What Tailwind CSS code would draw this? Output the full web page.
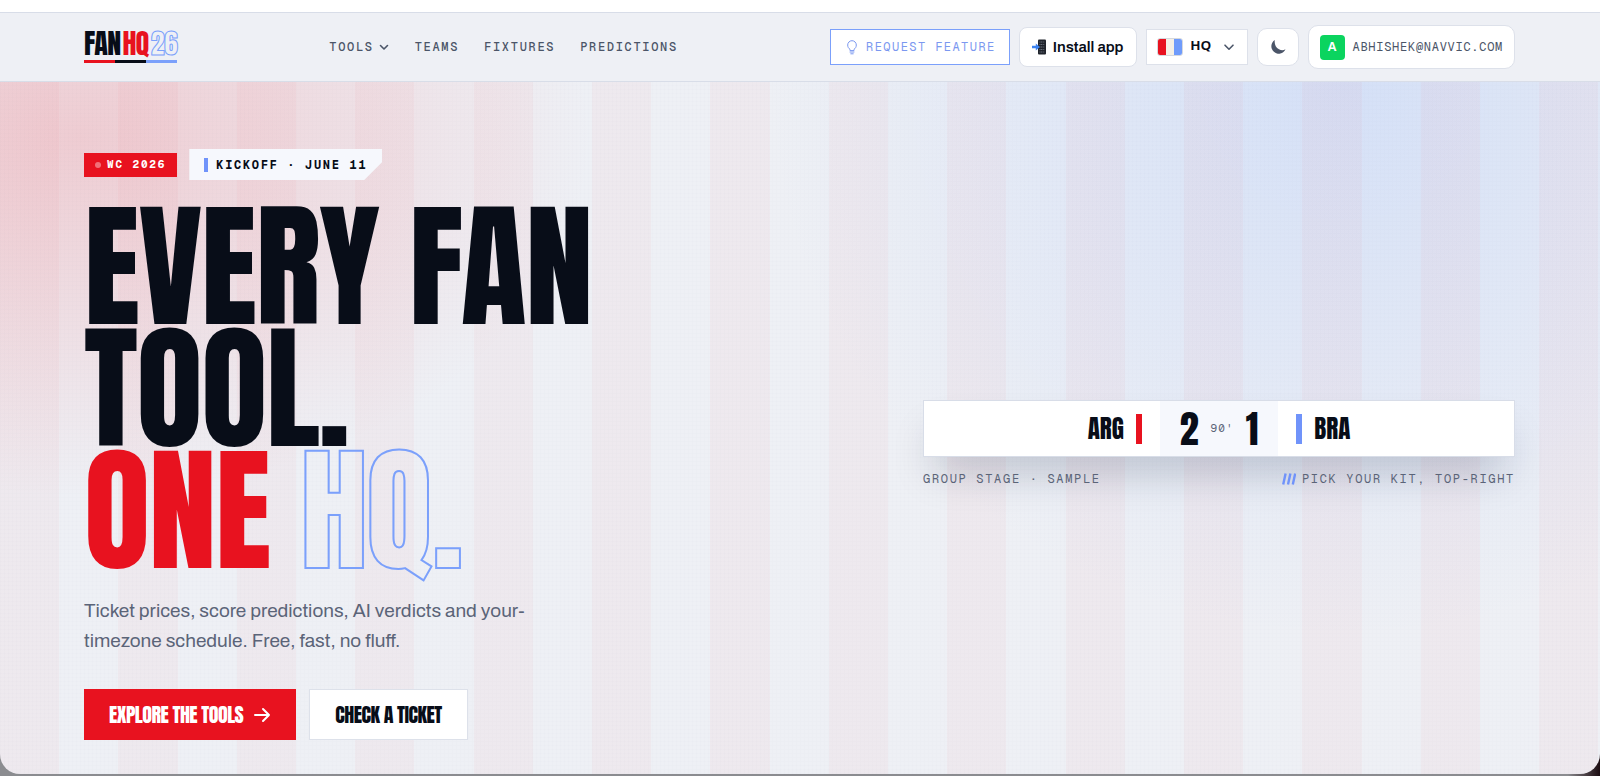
<!DOCTYPE html>
<html lang="en">
  <head>
    <meta charset="UTF-8" />
    <meta name="viewport" content="width=device-width, initial-scale=1.0" />
    <title>FAN HQ 26 - Every fan tool. One HQ.</title>
    <script src="https://cdn.jsdelivr.net/npm/@tailwindcss/browser@4"></script>
  </head>
  <body class="bg-linear-to-r from-[#8b8c90] from-98% to-[#1c0d12] font-[Archivo,'Liberation_Sans',sans-serif] text-[#080d18]">
    <div class="flex min-h-[calc(100vh-2px)] flex-col overflow-hidden rounded-b-[20px] bg-[#eef0f5]">
      <div class="h-3 bg-white"></div>

      <!-- Header -->
      <header class="border-y border-[#d8dde8] bg-[#eef0f5]">
        <div class="flex h-17 items-center justify-between pr-[85px] pl-21">
          <a href="#" class="block" aria-label="FAN HQ 26 home">
            <span class="mb-[5px] flex gap-0.5 font-[Anton,Impact,sans-serif] text-[28px] leading-6 tracking-tight">
              <span>FAN</span>
              <span class="text-[#e8121f]">HQ</span>
              <span class="text-transparent [-webkit-text-stroke:1px_#7ba0fb]">26</span>
            </span>
            <span class="flex h-[3px]">
              <span class="flex-1 bg-[#e8121f]"></span>
              <span class="flex-1 bg-[#080d18]"></span>
              <span class="flex-1 bg-[#7ba0fb]"></span>
            </span>
          </a>

          <nav class="flex items-center gap-[25px] font-['Geist_Mono','Liberation_Mono',monospace] text-[12px] font-medium tracking-[0.14em] text-[#4b5568]" aria-label="Main">
            <button type="button" class="flex items-center gap-1">
              TOOLS
              <svg class="size-3" viewBox="0 0 12 12" fill="none" stroke="currentColor" stroke-width="1.6" stroke-linecap="round" stroke-linejoin="round"><path d="M2.500 4.500 6 8l3.500-3.500" /></svg>
            </button>
            <a href="#teams">TEAMS</a>
            <a href="#fixtures">FIXTURES</a>
            <a href="#predictions">PREDICTIONS</a>
          </nav>

          <div class="flex items-center gap-[9px]">
            <a href="#request" class="flex h-9 items-center gap-1.5 border border-[#7ba0fb] bg-white px-[13px] font-['Geist_Mono','Liberation_Mono',monospace] text-[12px] tracking-[0.12em] text-[#7b98f0]">
              <svg class="size-4" viewBox="0 0 16 16" fill="none" stroke="currentColor" stroke-linecap="round" stroke-linejoin="round"><path d="M6 11.200v-.9C4.500 9.400 3.700 7.900 3.700 6a4.300 4.300 0 0 1 8.600 0c0 1.900-.8 3.400-2.300 4.300v.9zM6 13h4M6.800 14.800h2.400" /></svg>
              REQUEST FEATURE
            </a>
            <button type="button" class="flex h-10 items-center gap-[7px] rounded-lg border border-[#dde1ea] bg-white px-3 text-[15px] font-semibold">
              <svg class="h-4 w-3.5" viewBox="0 0 14 16"><rect x="6" y=".5" width="8" height="15" rx="1" fill="#20242c" /><path d="M7.500 3h5M7.500 5.500h5M7.500 8h5M7.500 10.500h5M7.500 13h5" stroke="#6f7682" stroke-width="1" stroke-dasharray="1 .6" /><path d="M0 6.800h3.800V4.500L8 8l-4.200 3.500V9.200H0z" fill="#3b82f0" /></svg>
              Install app
            </button>
            <div class="relative flex h-9 items-center border border-[#dde1ea] bg-white pl-2.5">
              <span class="flex h-[18px] w-[26px] overflow-hidden rounded-[3px] border border-[#d5d8de]">
                <span class="flex-1 bg-[#e8121f]"></span>
                <span class="flex-1 bg-[#f5f0e6]"></span>
                <span class="flex-1 bg-[#6f9bfb]"></span>
              </span>
              <select aria-label="Kit" class="h-full w-16 appearance-none pl-2 text-[13px] font-bold tracking-wide">
                <option>HQ</option>
              </select>
              <svg class="pointer-events-none absolute right-3 size-3" viewBox="0 0 12 12" fill="none" stroke="#4b5568" stroke-width="1.6" stroke-linecap="round" stroke-linejoin="round"><path d="M2 4.200 6 8.200l4-4" /></svg>
            </div>
            <button type="button" class="flex h-[38px] w-[42px] items-center justify-center rounded-[10px] border border-[#dde1ea] bg-white" aria-label="Dark mode">
              <svg class="size-4" viewBox="0 0 16 16" fill="#4b5568"><path d="M4.800 1A7.400 7.400 0 1 0 15.500 10.300 6.200 6.200 0 0 1 9 10.200C5.600 8.800 4.200 4.800 4.800 1z" /></svg>
            </button>
            <a href="#account" class="flex h-11 items-center gap-2 rounded-[10px] border border-[#dde1ea] bg-white px-[11px] font-['Geist_Mono','Liberation_Mono',monospace] text-[12px] tracking-[0.06em] text-[#4b5568]">
              <span class="flex size-[25px] items-center justify-center rounded-[4px] bg-[#0bd45f] font-[Archivo,sans-serif] text-[12px] font-bold tracking-normal text-white">A</span>
              ABHISHEK@NAVVIC.COM
            </a>
          </div>
        </div>
      </header>

      <!-- Hero, glows and kit stripes painted behind the content -->
      <main
        class="grow bg-[repeating-linear-gradient(0deg,rgba(20,30,60,0.006)_0_1px,transparent_1px_4px),repeating-linear-gradient(90deg,rgba(20,30,60,0.006)_0_1px,transparent_1px_4px),repeating-linear-gradient(90deg,rgba(232,18,31,0.032)_0_3.7%,transparent_3.7%_7.4%),radial-gradient(ellipse_32%_52%_at_5%_8%,rgba(240,60,70,0.2),transparent),radial-gradient(ellipse_36%_80%_at_84%_0%,rgba(110,160,255,0.2),transparent)]"
      >
        <div class="grid grid-cols-[1.35fr_1fr] items-center gap-10 pt-[67px] pr-[85px] pb-8 pl-21">
          <div>
            <div class="flex items-center gap-3 font-['Geist_Mono','Liberation_Mono',monospace] font-bold">
              <span class="flex h-6 items-center gap-1.5 bg-[#e8121f] px-[11px] text-[11px] tracking-[0.17em] text-white">
                <span class="size-1.5 rounded-full bg-white/40"></span>
                WC 2026
              </span>
              <span class="flex h-[31px] items-center gap-2 bg-[#f6f8fd] px-[15px] text-[12px] tracking-[0.14em] [clip-path:polygon(0_0,100%_0,100%_42%,calc(100%_-_18px)_100%,0_100%)]">
                <span class="h-3.5 w-1 bg-[#7093fa]"></span>
                KICKOFF · JUNE 11
              </span>
            </div>

            <h1 class="mt-[26px] font-[Anton,Impact,sans-serif] text-[136px] leading-[122px] font-normal tracking-[-0.01em]">
              <span class="block">EVERY FAN</span>
              <span class="block">TOOL.</span>
              <span class="block"><span class="text-[#e8121f]">ONE</span> <span class="text-transparent [-webkit-text-stroke:2px_#7ba0fb]">HQ.</span></span>
            </h1>

            <p class="mt-6 max-w-[460px] text-[19px] leading-[30px] text-[#5b6478]">
              Ticket prices, score predictions, AI verdicts and your-timezone schedule. Free, fast, no fluff.
            </p>

            <div class="mt-[33px] flex gap-[13px] font-[Anton,Impact,sans-serif] text-[20px] tracking-tight">
              <a href="#tools" class="flex h-[51px] items-center gap-2.5 bg-[#e8121f] px-[25px] text-white">
                EXPLORE THE TOOLS
                <svg class="size-[18px]" viewBox="0 0 18 18" fill="none" stroke="currentColor" stroke-width="2" stroke-linecap="round" stroke-linejoin="round"><path d="M2 9h14M10 3l6 6-6 6" /></svg>
              </a>
              <a href="#ticket" class="flex h-[51px] items-center border border-[#dde1ea] bg-white px-[25px]">CHECK A TICKET</a>
            </div>
          </div>

          <!-- Sample scoreboard -->
          <div>
            <div class="grid h-[57px] grid-cols-[1fr_auto_1fr] border border-[#d8dde8] bg-white font-[Anton,Impact,sans-serif] shadow-[0_24px_40px_-12px_rgba(20,30,60,0.25)]">
              <div class="flex items-center justify-end gap-3 pr-[18px] text-[25px]">
                ARG
                <span class="h-[30px] w-1.5 bg-[#e8121f]"></span>
              </div>
              <div class="flex items-center gap-3 bg-[#f6f8fd] px-5 text-[38px] leading-none">
                <span>2</span>
                <span class="font-['Geist_Mono','Liberation_Mono',monospace] text-[11px] tracking-widest text-[#5b6478]">90'</span>
                <span>1</span>
              </div>
              <div class="flex items-center gap-3 pl-[18px] text-[25px]">
                <span class="h-[30px] w-1.5 bg-[#7093fa]"></span>
                BRA
              </div>
            </div>
            <div class="mt-3 flex justify-between font-['Geist_Mono','Liberation_Mono',monospace] text-[12px] leading-5 tracking-[0.14em] text-[#5b6478]">
              <span>GROUP STAGE · SAMPLE</span>
              <span class="flex items-center gap-1.5">
                <svg class="h-3 w-3.5" viewBox="0 0 14 12" stroke="#7093fa" stroke-width="2.400"><path d="M1.200 11.500 3.600 .5M6 11.500 8.400 .5M10.800 11.500 13.200 .5" /></svg>
                PICK YOUR KIT, TOP-RIGHT
              </span>
            </div>
          </div>
        </div>
      </main>
    </div>
  </body>
</html>
